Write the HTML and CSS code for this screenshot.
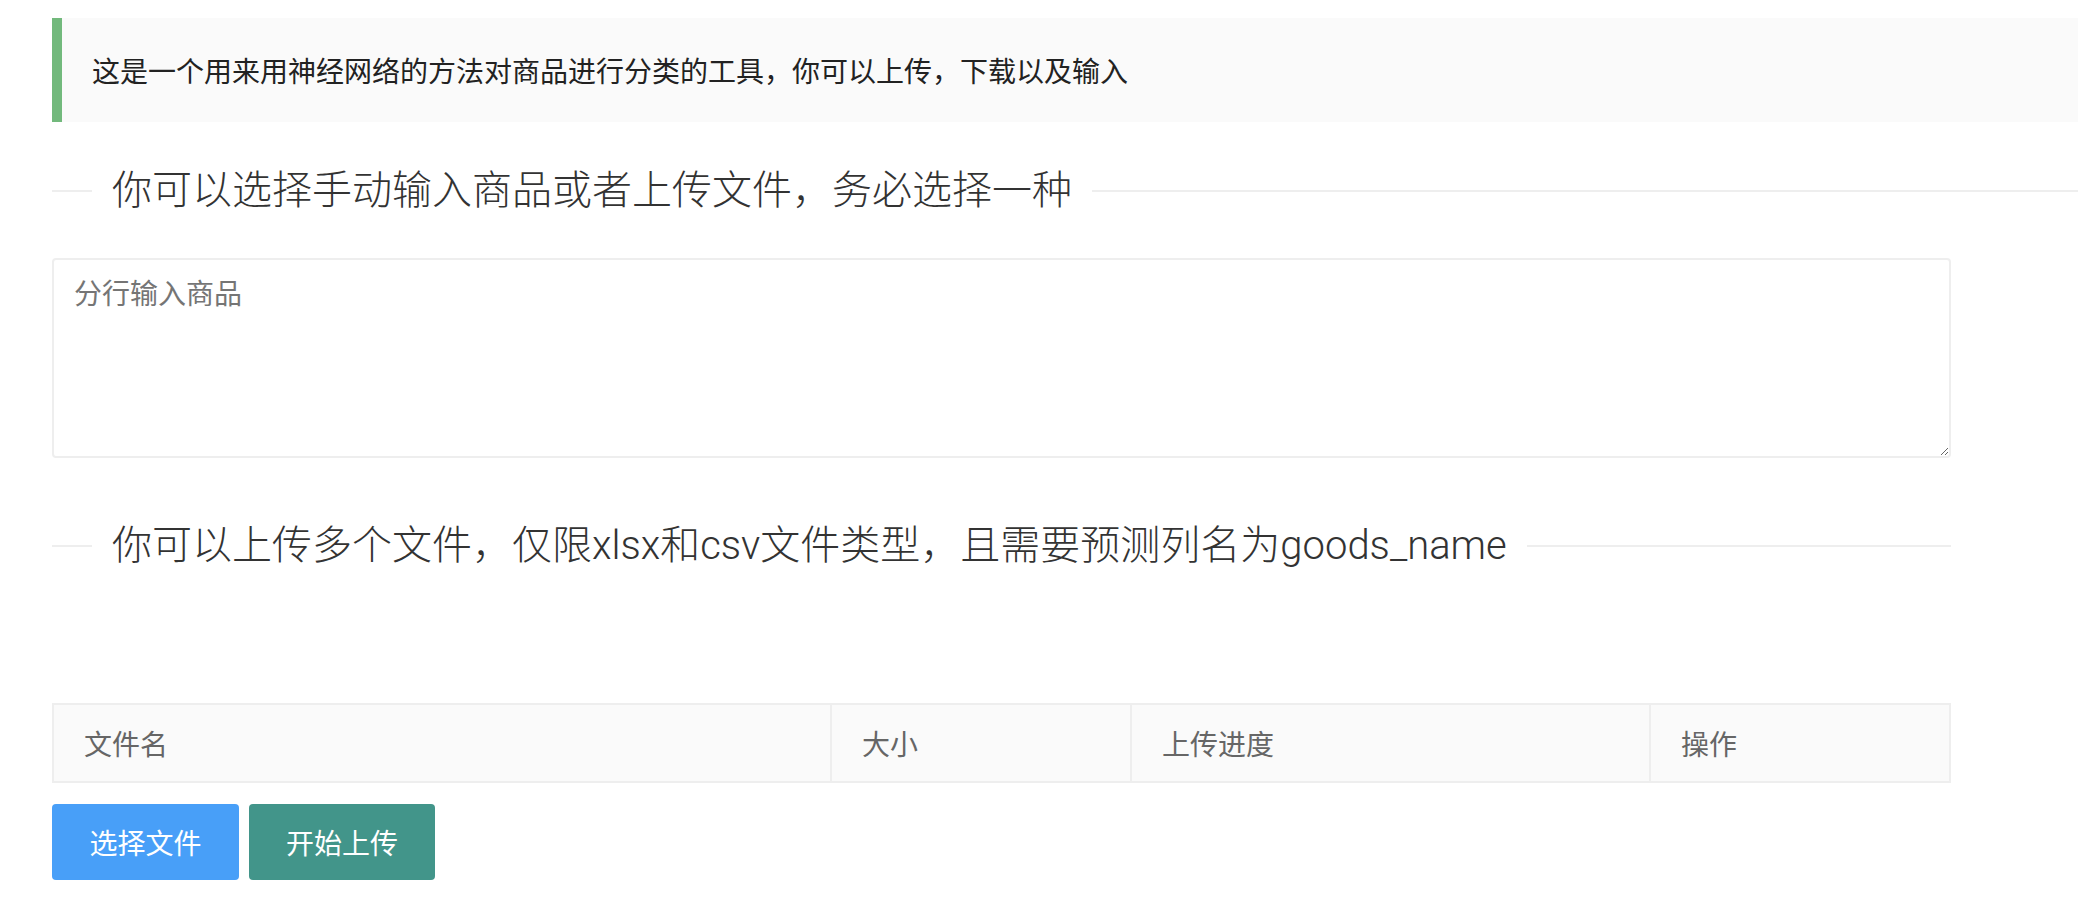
FILE: index.html
```html
<!DOCTYPE html>
<html lang="zh-CN">
<head>
<meta charset="utf-8">
<title>商品分类工具</title>
<link rel="stylesheet" href="styles.css">
</head>
<body>
<div class="page">
  <blockquote class="quote">这是一个用来用神经网络的方法对商品进行分类的工具，你可以上传，下载以及输入</blockquote>

  <div class="field-title full"><span class="legend">你可以选择手动输入商品或者上传文件，务必选择一种</span></div>

  <div class="form">
    <textarea class="textarea" placeholder="分行输入商品"></textarea>

    <div class="field-title second"><span class="legend">你可以上传多个文件，仅限xlsx和csv文件类型，且需要预测列名为goods_name</span></div>

    <div class="table">
      <div class="cell c1">文件名</div>
      <div class="cell c2">大小</div>
      <div class="cell c3">上传进度</div>
      <div class="cell c4">操作</div>
    </div>

    <div class="actions">
      <button class="btn btn-blue">选择文件</button>
      <button class="btn btn-teal">开始上传</button>
    </div>
  </div>
</div>
</body>
</html>
```
FILE: styles.css
```css
html, body {
  margin: 0;
  padding: 0;
  background: #ffffff;
}

body {
  font-family: "Noto Sans CJK SC", "Liberation Sans", sans-serif;
  color: #333333;
  overflow: hidden;
}

.page {
  padding: 18px 0 0 52px;
}

.quote {
  margin: 0;
  height: 104px;
  box-sizing: border-box;
  display: flex;
  align-items: center;
  padding: 0 30px;
  border-left: 10px solid #72b97c;
  background: #fafafa;
  font-size: 28px;
  line-height: 44px;
  color: #222222;
}

.field-title {
  display: flex;
  align-items: center;
  height: 60px;
}

.field-title::before {
  content: "";
  width: 40px;
  height: 2px;
  background: #eeeeee;
  flex: none;
}

.field-title::after {
  content: "";
  flex: 1;
  height: 2px;
  background: #eeeeee;
}

.legend {
  padding: 0 20px;
  font-family: "Roboto", "Noto Sans CJK SC", sans-serif;
  font-size: 40px;
  font-weight: 300;
  line-height: 60px;
  color: #333333;
  white-space: nowrap;
}

.field-title.full {
  margin-top: 39px;
}

.form {
  width: 1899px;
}

.textarea {
  display: block;
  margin-top: 37px;
  width: 1899px;
  height: 200px;
  box-sizing: border-box;
  padding: 12px 20px;
  border: 2px solid #eeeeee;
  border-radius: 4px;
  font-family: "Noto Sans CJK SC", "Liberation Sans", sans-serif;
  font-size: 28px;
  line-height: 40px;
  color: #333333;
  outline: none;
  resize: vertical;
}

.textarea::placeholder {
  color: #757575;
}

.field-title.second {
  margin-top: 58px;
}

.table {
  display: flex;
  margin-top: 127px;
  height: 80px;
  box-sizing: border-box;
  border: 2px solid #eeeeee;
  background: #fafafa;
}

.cell {
  display: flex;
  align-items: center;
  box-sizing: border-box;
  padding-left: 30px;
  font-size: 28px;
  color: #666666;
}

.c1 { width: 776px; }
.c2 { width: 300px; border-left: 2px solid #eeeeee; }
.c3 { width: 519px; border-left: 2px solid #eeeeee; }
.c4 { flex: 1; border-left: 2px solid #eeeeee; }

.actions {
  display: flex;
  gap: 10px;
  margin-top: 21px;
}

.btn {
  width: 187px;
  height: 76px;
  padding: 0;
  border: none;
  border-radius: 4px;
  font-family: "Noto Sans CJK SC", "Liberation Sans", sans-serif;
  font-size: 28px;
  color: #ffffff;
  cursor: pointer;
}

.btn-blue { background: #489ff8; }
.btn-teal { background: #42958a; width: 186px; }
```
